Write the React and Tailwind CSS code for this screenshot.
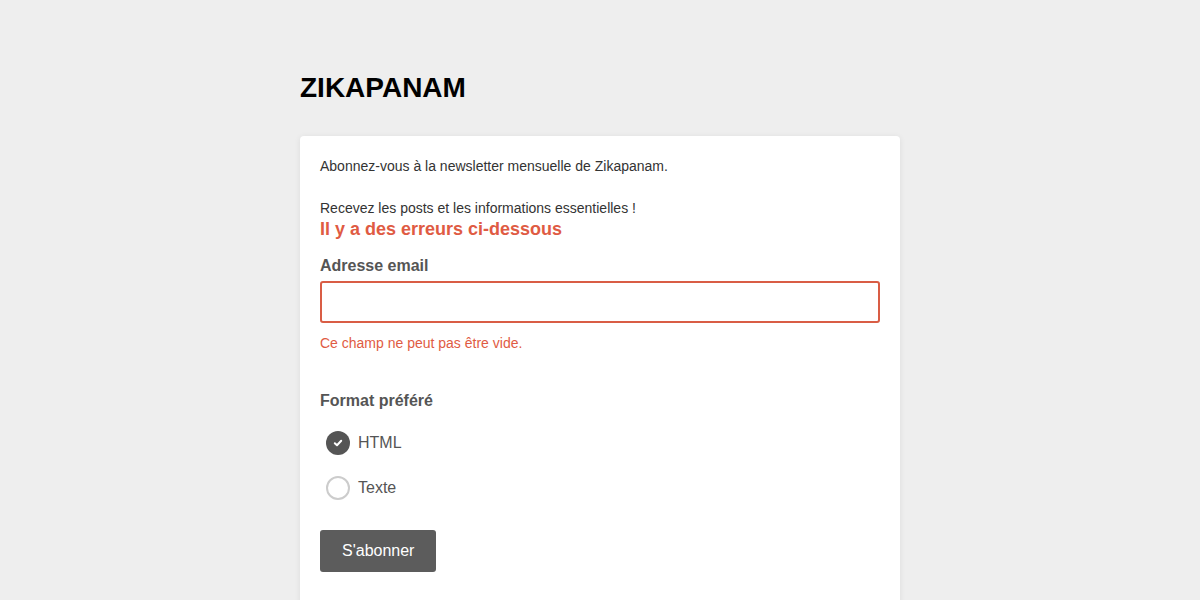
import React from "react";

export default function App() {
  return (
    <div className="min-h-[600px] w-full bg-[#eeeeee] font-['Liberation_Sans',Arial,sans-serif]">
      <div className="mx-auto w-[600px] pt-[71px]">
        <h1 className="mb-[31px] text-[28px] font-bold leading-[34px] text-black">ZIKAPANAM</h1>
        <div className="rounded-[4px] bg-white px-5 pb-8 pt-5 shadow-[0_1px_6px_rgba(0,0,0,0.08)]">
          <p className="text-[14px] leading-[21px] text-[#333333]">
            Abonnez-vous à la newsletter mensuelle de Zikapanam.
            <br />
            <br />
            Recevez les posts et les informations essentielles !
          </p>
          <h2 className="text-[18px] font-bold leading-[21px] text-[#df5b43]">Il y a des erreurs ci-dessous</h2>
          <label className="mt-[14px] block text-[16px] font-bold leading-[24px] text-[#555555]">Adresse email</label>
          <input
            type="email"
            className="mt-[3px] block h-[42px] w-full rounded-[3px] border-2 border-[#d95d45] bg-white px-3 text-[16px] outline-none"
          />
          <p className="mt-[9.5px] text-[14px] leading-[21px] text-[#df5b43]">Ce champ ne peut pas être vide.</p>
          <div className="mt-[35.5px] text-[16px] font-bold leading-[24px] text-[#555555]">Format préféré</div>
          <div className="mt-[18px] flex flex-col gap-[21px]">
            <div className="flex h-6 items-center">
              <span className="ml-[6px] flex h-6 w-6 items-center justify-center rounded-full bg-[#555555]">
                <svg width="12" height="12" viewBox="0 0 12 12" fill="none">
                  <path d="M2.8 6.2 L5 8.3 L9.2 3.8" stroke="white" strokeWidth="2" strokeLinecap="round" strokeLinejoin="round" />
                </svg>
              </span>
              <span className="ml-2 text-[16px] text-[#555555]">HTML</span>
            </div>
            <div className="flex h-6 items-center">
              <span className="ml-[6px] h-6 w-6 rounded-full border-2 border-[#cccccc] bg-white" />
              <span className="ml-2 text-[16px] text-[#555555]">Texte</span>
            </div>
          </div>
          <button className="mt-[30px] h-[42px] rounded-[3px] bg-[#5c5c5c] px-[22px] text-[16px] text-white">S'abonner</button>
        </div>
      </div>
    </div>
  );
}
